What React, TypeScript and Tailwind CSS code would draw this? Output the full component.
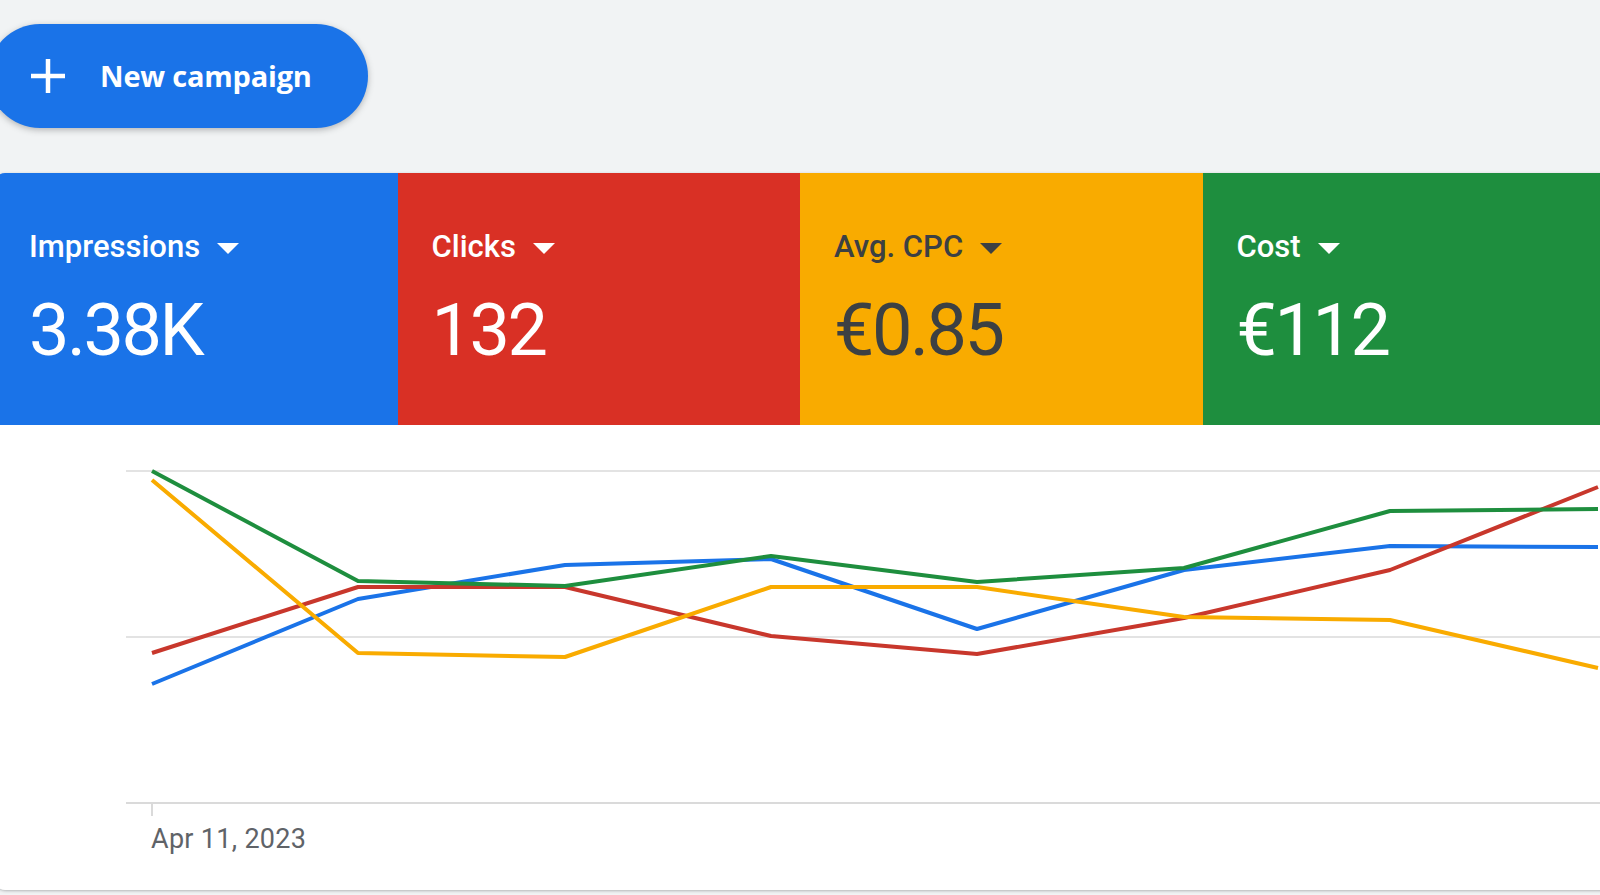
import React from "react";

interface Metric {
  label: string;
  value: string;
  bg: string;
  text: string;
}

const metrics: Metric[] = [
  { label: "Impressions", value: "3.38K", bg: "bg-[#1a73e8]", text: "text-white" },
  { label: "Clicks", value: "132", bg: "bg-[#d93025]", text: "text-white" },
  { label: "Avg. CPC", value: "€0.85", bg: "bg-[#f9ab00]", text: "text-[#3c4043]" },
  { label: "Cost", value: "€112", bg: "bg-[#1e8e3e]", text: "text-white" },
];

// x positions of the data points, in page pixels
const xs = [152, 358, 565, 771, 977, 1184, 1390, 1598];

const series = [
  { color: "#1a73e8", ys: [684, 599, 565, 559, 629, 570, 546, 547] },
  { color: "#c8372c", ys: [653, 587, 587, 636, 654, 618, 570, 487] },
  { color: "#f9ab00", ys: [480, 653, 657, 587, 587, 617, 620, 668] },
  { color: "#1e8e3e", ys: [471, 581, 586, 556, 582, 568, 511, 509] },
];

function points(ys: number[]) {
  return ys.map((y, i) => `${xs[i]},${y}`).join(" ");
}

function Caret() {
  return (
    <svg width="22" height="11" viewBox="0 0 22 11" className="ml-[17px] mt-[2px]">
      <path d="M0 0 L22 0 L11 11 Z" fill="currentColor" />
    </svg>
  );
}

function MetricTile({ metric }: { metric: Metric }) {
  return (
    <div className={`${metric.bg} ${metric.text} w-[402.5px] shrink-0 h-[252px] pt-[56px] pl-[34px]`}>
      <div className="flex items-center text-[31px] leading-[36px] font-medium">
        <span>{metric.label}</span>
        <Caret />
      </div>
      <div className="mt-[31px] text-[72px] leading-[70px] tracking-[-2.5px]">{metric.value}</div>
    </div>
  );
}

export default function App() {
  return (
    <div
      className="w-[1600px] h-[895px] overflow-hidden bg-[#f1f3f4]"
      style={{ fontFamily: "Roboto, 'Liberation Sans', sans-serif" }}
    >
      {/* New campaign button */}
      <div className="pt-[24px]">
        <button className="ml-[-12px] flex items-center h-[104px] w-[380px] rounded-full bg-[#1a73e8] text-white shadow-[0_2px_6px_rgba(60,64,67,0.35)]">
          <svg width="38" height="38" viewBox="0 0 38 38" className="ml-[41px]">
            <path d="M19 2 V36 M2 19 H36" stroke="white" strokeWidth="4.5" />
          </svg>
          <span className="ml-[33px] text-[29px] font-bold tracking-[-0.2px]" style={{ fontFamily: "'Open Sans', Roboto, sans-serif" }}>
            New campaign
          </span>
        </button>
      </div>

      {/* Performance card */}
      <div className="mt-[45px] ml-[-5px] w-[1620px] rounded-[10px] bg-white overflow-hidden shadow-[0_1px_3px_rgba(60,64,67,0.35)]">
        <div className="flex">
          {metrics.map((m) => (
            <MetricTile key={m.label} metric={m} />
          ))}
        </div>
        <div className="h-[465px] pl-[5px]">
          <svg width="1600" height="400" viewBox="0 425 1600 400" className="block">
            <line x1="126" y1="471" x2="1600" y2="471" stroke="#e3e3e3" strokeWidth="2" />
            <line x1="126" y1="637" x2="1600" y2="637" stroke="#e3e3e3" strokeWidth="2" />
            <line x1="126" y1="803" x2="1600" y2="803" stroke="#dadada" strokeWidth="2" />
            <line x1="152" y1="803" x2="152" y2="816" stroke="#dadada" strokeWidth="2" />
            {series.map((s) => (
              <polyline
                key={s.color}
                points={points(s.ys)}
                fill="none"
                stroke={s.color}
                strokeWidth="4"
                strokeLinejoin="round"
              />
            ))}
          </svg>
          <div className="pl-[151px] mt-[-1px] text-[27px] leading-[30px] text-[#5f6368] tracking-[0.3px]">
            Apr 11, 2023
          </div>
        </div>
      </div>
    </div>
  );
}
